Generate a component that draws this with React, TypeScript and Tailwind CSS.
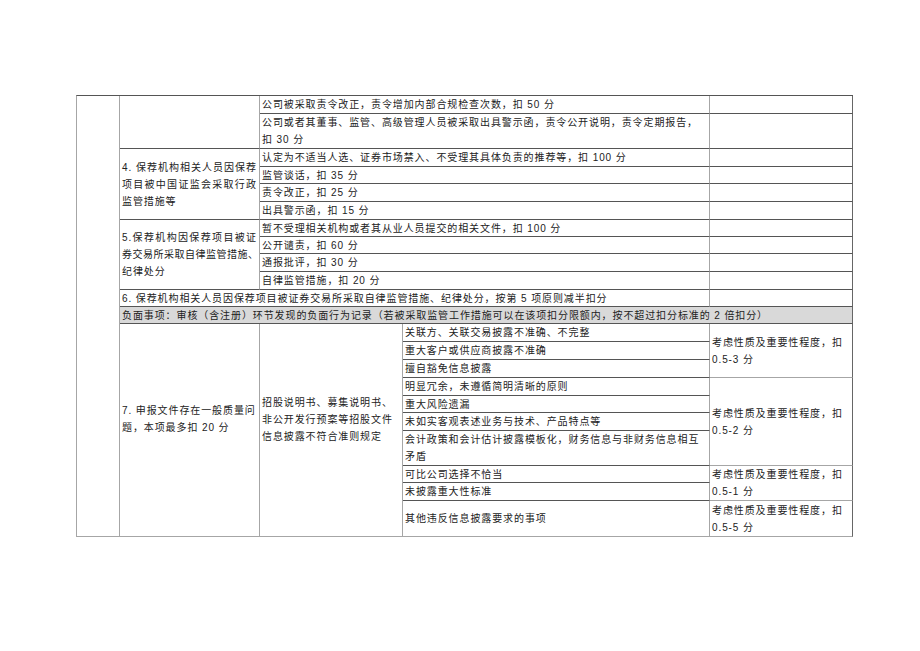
import React from "react";

// line colours
const H = "border-b border-b-[#555]"; // horizontal rule
const HG = "border-b border-b-[#a6a6a6]"; // light horizontal rule
const V = "border-r border-r-[#a6a6a6]"; // vertical rule
const VR = "border-r border-r-[#666]"; // right edge
const cell = "p-0 px-[2px] align-middle text-left font-normal whitespace-nowrap";
const J = "[text-align-last:justify] text-justify";

type Row = { h: string; children: React.ReactNode };

function Tr({ h, children }: Row) {
    return <tr className={h}>{children}</tr>;
}

function Empty({ last }: { last?: boolean }) {
    return <td className={`${cell} ${VR} ${last ? HG : H}`} />;
}

// one text line of a fixed pitch
function L({ className = "", children }: { className?: string; children: React.ReactNode }) {
    return <div className={`h-[17px] leading-[17px] ${className}`}>{children}</div>;
}

export default function App() {
    return (
        <div className="min-h-screen bg-white pt-[95px] pl-[76px] text-[10px] leading-[13px] tracking-[0.9px] text-[#222] font-['Liberation_Sans','Noto_Sans_CJK_SC',sans-serif]">
            <table className="w-[776px] table-fixed border-separate border-spacing-0 border-t border-t-[#555] border-l border-l-[#a6a6a6]">
                <colgroup>
                    <col className="w-[43px]" />
                    <col className="w-[140px]" />
                    <col className="w-[143px]" />
                    <col className="w-[307px]" />
                    <col className="w-[143px]" />
                </colgroup>
                <tbody>
                    <Tr h="h-[18px]">
                        <td rowSpan={22} className={`${cell} ${V} ${HG}`} />
                        <td rowSpan={2} className={`${cell} ${V} ${H}`} />
                        <td colSpan={2} className={`${cell} ${V} ${H}`}>
                            公司被采取责令改正，责令增加内部合规检查次数，扣 50 分
                        </td>
                        <Empty />
                    </Tr>
                    <Tr h="h-[35px]">
                        <td colSpan={2} className={`${cell} ${V} ${H}`}>
                            <L className="h-[16px]">公司或者其董事、监管、高级管理人员被采取出具警示函，责令公开说明，责令定期报告，</L>
                            <L className="h-[16px]">扣 30 分</L>
                        </td>
                        <Empty />
                    </Tr>

                    {/* 4. 行政监管措施 */}
                    <Tr h="h-[18px]">
                        <td rowSpan={4} className={`${cell} ${V} ${H}`}>
                            <L className={J}>4. 保荐机构相关人员因保荐</L>
                            <L className={J}>项目被中国证监会采取行政</L>
                            <L>监管措施等</L>
                        </td>
                        <td colSpan={2} className={`${cell} ${V} ${H}`}>
                            认定为不适当人选、证券市场禁入、不受理其具体负责的推荐等，扣 100 分
                        </td>
                        <Empty />
                    </Tr>
                    <Tr h="h-[17px]">
                        <td colSpan={2} className={`${cell} ${V} ${H}`}>监管谈话，扣 35 分</td>
                        <Empty />
                    </Tr>
                    <Tr h="h-[18px]">
                        <td colSpan={2} className={`${cell} ${V} ${H}`}>责令改正，扣 25 分</td>
                        <Empty />
                    </Tr>
                    <Tr h="h-[18px]">
                        <td colSpan={2} className={`${cell} ${V} ${H}`}>出具警示函，扣 15 分</td>
                        <Empty />
                    </Tr>

                    {/* 5. 自律监管措施 */}
                    <Tr h="h-[17px]">
                        <td rowSpan={4} className={`${cell} ${V} ${H}`}>
                            <L className={J}>5.保荐机构因保荐项目被证</L>
                            <L className="tracking-[0.5px]">券交易所采取自律监管措施、</L>
                            <L>纪律处分</L>
                        </td>
                        <td colSpan={2} className={`${cell} ${V} ${H}`}>
                            暂不受理相关机构或者其从业人员提交的相关文件，扣 100 分
                        </td>
                        <Empty />
                    </Tr>
                    <Tr h="h-[17px]">
                        <td colSpan={2} className={`${cell} ${V} ${H}`}>公开谴责，扣 60 分</td>
                        <Empty />
                    </Tr>
                    <Tr h="h-[18px]">
                        <td colSpan={2} className={`${cell} ${V} ${H}`}>通报批评，扣 30 分</td>
                        <Empty />
                    </Tr>
                    <Tr h="h-[18px]">
                        <td colSpan={2} className={`${cell} ${V} ${H}`}>自律监管措施，扣 20 分</td>
                        <Empty />
                    </Tr>

                    <Tr h="h-[17px]">
                        <td colSpan={3} className={`${cell} ${V} ${H}`}>
                            6. 保荐机构相关人员因保荐项目被证券交易所采取自律监管措施、纪律处分，按第 5 项原则减半扣分
                        </td>
                        <Empty />
                    </Tr>

                    {/* 负面事项 */}
                    <Tr h="h-[17px]">
                        <td colSpan={4} className={`${cell} ${VR} ${H} bg-[#d9d9d9]`}>
                            负面事项：审核（含注册）环节发现的负面行为记录（若被采取监管工作措施可以在该项扣分限额内，按不超过扣分标准的 2 倍扣分）
                        </td>
                    </Tr>

                    <Tr h="h-[18px]">
                        <td rowSpan={10} className={`${cell} ${V} ${HG} pb-[22px]`}>
                            <L>7. 申报文件存在一般质量问</L>
                            <L>题，本项最多扣 20 分</L>
                        </td>
                        <td rowSpan={10} className={`${cell} ${V} ${HG} pb-[22px]`}>
                            <L>招股说明书、募集说明书、</L>
                            <L>非公开发行预案等招股文件</L>
                            <L>信息披露不符合准则规定</L>
                        </td>
                        <td className={`${cell} ${V} ${H}`}>关联方、关联交易披露不准确、不完整</td>
                        <td rowSpan={3} className={`${cell} ${VR} ${HG}`}>
                            <L>考虑性质及重要性程度，扣</L>
                            <L>0.5-3 分</L>
                        </td>
                    </Tr>
                    <Tr h="h-[18px]">
                        <td className={`${cell} ${V} ${H}`}>重大客户或供应商披露不准确</td>
                    </Tr>
                    <Tr h="h-[18px]">
                        <td className={`${cell} ${V} ${H}`}>擅自豁免信息披露</td>
                    </Tr>
                    <Tr h="h-[18px]">
                        <td className={`${cell} ${V} ${H}`}>明显冗余，未遵循简明清晰的原则</td>
                        <td rowSpan={4} className={`${cell} ${VR} ${HG}`}>
                            <L>考虑性质及重要性程度，扣</L>
                            <L>0.5-2 分</L>
                        </td>
                    </Tr>
                    <Tr h="h-[17px]">
                        <td className={`${cell} ${V} ${H}`}>重大风险遗漏</td>
                    </Tr>
                    <Tr h="h-[18px]">
                        <td className={`${cell} ${V} ${H}`}>未如实客观表述业务与技术、产品特点等</td>
                    </Tr>
                    <Tr h="h-[34px]">
                        <td className={`${cell} ${V} ${H}`}>
                            <L className="h-[16px]">会计政策和会计估计披露模板化，财务信息与非财务信息相互</L>
                            <L className="h-[16px]">矛盾</L>
                        </td>
                    </Tr>
                    <Tr h="h-[17px]">
                        <td className={`${cell} ${V} ${H}`}>可比公司选择不恰当</td>
                        <td rowSpan={2} className={`${cell} ${VR} ${HG}`}>
                            <L>考虑性质及重要性程度，扣</L>
                            <L>0.5-1 分</L>
                        </td>
                    </Tr>
                    <Tr h="h-[18px]">
                        <td className={`${cell} ${V} ${H}`}>未披露重大性标准</td>
                    </Tr>
                    <Tr h="h-[36px]">
                        <td className={`${cell} ${V} ${HG}`}>其他违反信息披露要求的事项</td>
                        <td className={`${cell} ${VR} ${HG}`}>
                            <L>考虑性质及重要性程度，扣</L>
                            <L>0.5-5 分</L>
                        </td>
                    </Tr>
                </tbody>
            </table>
        </div>
    );
}
